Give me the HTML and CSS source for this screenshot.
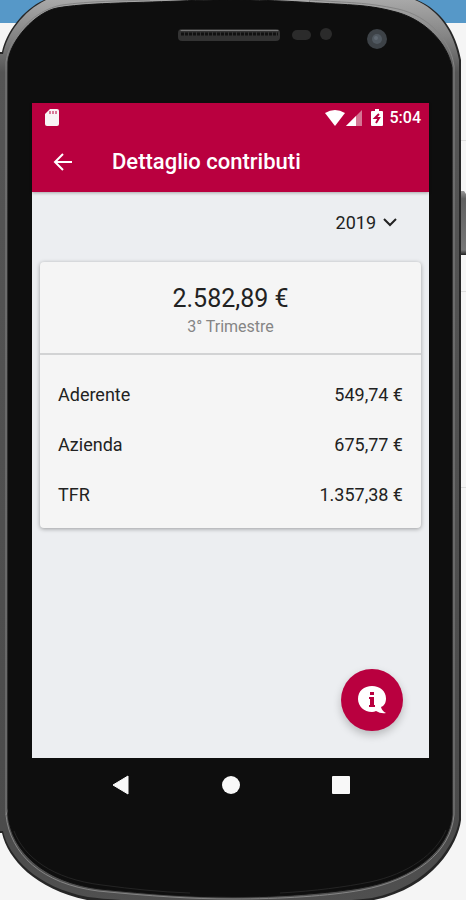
FILE: index.html
```html
<!DOCTYPE html>
<html lang="it">
<head>
<meta charset="utf-8">
<meta name="viewport" content="width=device-width, initial-scale=1">
<title>Dettaglio contributi</title>
<link rel="stylesheet" href="styles.css">
</head>
<body>
<div class="phone">
  <svg class="frame" viewBox="0 0 466 900" preserveAspectRatio="none" aria-hidden="true">
    <defs>
      <linearGradient id="metal" x1="0" y1="0" x2="0" y2="1">
        <stop offset="0" stop-color="#a8a8a8"/>
        <stop offset=".04" stop-color="#858585"/>
        <stop offset=".08" stop-color="#555"/>
        <stop offset=".92" stop-color="#4b4b4b"/>
        <stop offset="1" stop-color="#505050"/>
      </linearGradient>
      <linearGradient id="key" x1="0" y1="0" x2="0" y2="1">
        <stop offset="0" stop-color="#999"/>
        <stop offset=".12" stop-color="#606060"/>
        <stop offset=".92" stop-color="#777"/>
        <stop offset="1" stop-color="#222"/>
      </linearGradient>
    </defs>
    <path d="M460 140.500h6M460 291.500h6M460 487.500h6" stroke="#dedede"/>
    <path d="M460 191h4l2 3v61h-6z" fill="url(#key)"/>
    <path d="M0 52H2C6 33 22 10 44 0H417C441 10 456 32 461 60V820C458 844 433 888 374 900H87C35 889 8 859 2 833H0Z" fill="#262626"/>
    <path d="M0 54H3C7 34 23 11 46 0H415C439 10 454 32 459 60V820C456 843 430 886 372 898C320 905 150 905 88 897C36 887 9 857 3 831H0Z" fill="url(#metal)"/>
    <path d="M6 815V62C9 38 33 10 62 5C90 1 120 1 150 0M310 0C350 3 365 2 398 9C429 16 451 41 454 66V815C451 852 415 880 362 890C330 896 280 899 233 899C190 899 150 896 98 891C42 884 10 854 6 815Z" fill="none" stroke="#858585"/>
    <path d="M8 815V62C10 40 36 12 57 8C85 3 130 3 180 1C220 -1 270 0 300 2C345 5 365 4 392 11C424 18 448 43 452 68V815C449 850 414 879 360 888C330 893 280 897 233 897C190 897 150 894 100 889C44 882 12 852 8 815Z" fill="#0e0e0e" stroke="#111"/>
    <path d="M14 831C24 857 52 879 102 885C132 889 160 892 190 893M280 893C315 891 345 887 370 882C408 874 436 854 446 830" fill="none" stroke="#242424"/>
    <rect x="178" y="29" width="102" height="12" rx="4" fill="#333"/>
    <path d="M181 30.500H278" stroke="#747474" stroke-linecap="round"/>
    <path d="M181 34H278" stroke="#111" stroke-width="3" stroke-dasharray="3 1"/>
    <rect x="292" y="30" width="19" height="10" rx="5" fill="#2b2b2b"/>
    <circle cx="326" cy="34" r="6" fill="#2b2b2b"/>
    <circle cx="377" cy="39" r="10" fill="#3d4247"/>
    <circle cx="377" cy="39" r="5" fill="#505860"/>
    <circle cx="376" cy="38" r="2" fill="#606972"/>
  </svg>
  <div class="screen">
    <header class="top">
      <div class="status">
        <svg class="sd" width="14" height="18" viewBox="0 0 14 18" aria-hidden="true"><path d="M5 0H12Q14 0 14 2V15Q14 17 12 17H2Q0 17 0 15V5Z" fill="#f8f4f5"/><path d="M5 2V5M8 2V5M11 2V5" stroke="#b9003f"/></svg>
        <svg width="20" height="16" viewBox="0 0 20 16" aria-hidden="true"><path d="M0 3Q10 -3 20 3L10 16Z" fill="#fff"/></svg>
        <svg class="signal" width="16" height="16" viewBox="0 0 16 16" aria-hidden="true"><path d="M16 0V16H0Z" fill="#d57694"/><path d="M10 6V16H0Z" fill="#fff"/></svg>
        <svg class="battery" width="12" height="18" viewBox="0 0 12 18" aria-hidden="true"><path d="M4 0H8V2H11Q12 2 12 3V16Q12 17 11 17H1Q0 17 0 16V3Q0 2 1 2H4Z" fill="#fff"/><path d="M8 5L4 9H8L5 14" fill="none" stroke="#b9003f" stroke-width="2"/></svg>
        <span class="time">5:04</span>
      </div>
      <div class="bar">
        <button class="back" aria-label="Indietro"><svg width="20" height="20" viewBox="0 0 20 20" aria-hidden="true"><path d="M19 10H2M10 2L2 10L10 18" fill="none" stroke="#fff" stroke-width="2"/></svg></button>
        <h1>Dettaglio contributi</h1>
      </div>
    </header>
    <main>
      <button class="year" aria-haspopup="listbox">2019 <svg width="14" height="10" viewBox="0 0 14 10" aria-hidden="true"><path d="M1 2L7 8L13 2" fill="none" stroke="#222" stroke-width="2"/></svg></button>
      <section class="card">
        <div class="total">
          <strong>2.582,89 €</strong>
          <span>3° Trimestre</span>
        </div>
        <dl>
          <div class="row"><dt>Aderente</dt><dd>549,74 €</dd></div>
          <div class="row"><dt>Azienda</dt><dd>675,77 €</dd></div>
          <div class="row"><dt>TFR</dt><dd>1.357,38 €</dd></div>
        </dl>
      </section>
      <button class="help" aria-label="Informazioni"><svg width="28" height="28" viewBox="0 0 28 28" aria-hidden="true"><path d="M14 0C22 0 28 5 28 12.500C28 17 26 20 23 21Q24 25 28 27Q23 28 18 25Q16 26 14 26C6 26 0 20 0 13C0 5 6 0 14 0Z" fill="#fff"/><path d="M12 6H16V9H12ZM11 11H16V19H17V21H11V19H12V13H11Z" fill="#b9003f"/></svg></button>
    </main>
  </div>
  <nav class="keys" aria-label="Navigazione">
    <button aria-label="Indietro"><svg width="20" height="20" viewBox="0 0 20 20" aria-hidden="true"><path d="M2 10L17 1V19Z" fill="#f8f8f8" stroke="#f8f8f8" stroke-linejoin="round"/></svg></button>
    <button aria-label="Home"><svg width="20" height="20" viewBox="0 0 20 20" aria-hidden="true"><circle cx="10" cy="10" r="9" fill="#f8f8f8"/></svg></button>
    <button aria-label="Recenti"><svg width="20" height="20" viewBox="0 0 20 20" aria-hidden="true"><rect x="1" y="1" width="18" height="18" rx="1" fill="#f8f8f8"/></svg></button>
  </nav>
</div>
</body>
</html>
```
FILE: styles.css
```css
* {
  box-sizing: border-box;
}

body {
  margin: 0;
  background: linear-gradient(#5698c8 23px, #f5f5f5 23px);
  color: #222;
  font-family: Roboto, sans-serif;
}

button {
  display: flex;
  align-items: center;
  justify-content: center;
  padding: 0;
  border: 0;
  background: none;
  color: inherit;
  font: inherit;
}

.phone {
  position: relative;
  display: flex;
  flex-direction: column;
  min-height: 100vh;
  padding: 103px 37px 88px 32px;
}

.frame {
  position: absolute;
  inset: 0;
  width: 100%;
  height: 100%;
}

.screen {
  position: relative;
  flex: 1;
  display: flex;
  flex-direction: column;
  background: #eceef1;
}

.top {
  padding-bottom: 6px;
  background: #b9003f;
  color: #fff;
  box-shadow: 0 1px 3px rgba(0, 0, 0, 0.3);
}

.status {
  display: flex;
  align-items: center;
  height: 29px;
  padding: 0 8px 0 13px;
}

.sd {
  margin-right: auto;
}

.signal {
  margin-left: 1px;
}

.battery {
  margin: 0 7px 0 9px;
}

.time {
  font-size: 16px;
  font-weight: 500;
}

.bar {
  display: flex;
  align-items: center;
  height: 54px;
  padding: 5px 20px 0 21px;
  gap: 39px;
}

h1 {
  margin: 0;
  font-size: 22px;
  font-weight: 500;
}

main {
  flex: 1;
  display: flex;
  flex-direction: column;
  padding: 14px 8px 27px;
}

.year {
  align-self: flex-end;
  height: 32px;
  margin-right: 24px;
  gap: 7px;
  font-size: 18px;
}

.card {
  margin-top: 24px;
  border-radius: 4px;
  background: #f5f5f5;
  box-shadow: 0 1px 4px rgba(0, 0, 0, 0.35);
}

.total {
  display: flex;
  flex-direction: column;
  align-items: center;
  padding: 21px 0 14px;
  border-bottom: 2px solid #d2d3d4;
}

.total strong {
  font-size: 25px;
  font-weight: 400;
  line-height: 32px;
}

.total span {
  color: #858585;
  font-size: 16px;
  line-height: 24px;
}

dl {
  margin: 0;
  padding: 14px 18px 9px;
}

.row {
  display: flex;
  align-items: center;
  justify-content: space-between;
  height: 50px;
  font-size: 18px;
}

dd {
  margin: 0;
}

.help {
  align-self: flex-end;
  width: 62px;
  height: 62px;
  margin: auto 18px 0 0;
  border-radius: 50%;
  background: #b9003f;
  box-shadow: 0 4px 8px rgba(0, 0, 0, 0.22);
}

.keys {
  position: relative;
  display: flex;
  justify-content: center;
  gap: 90px;
  height: 54px;
}
```
